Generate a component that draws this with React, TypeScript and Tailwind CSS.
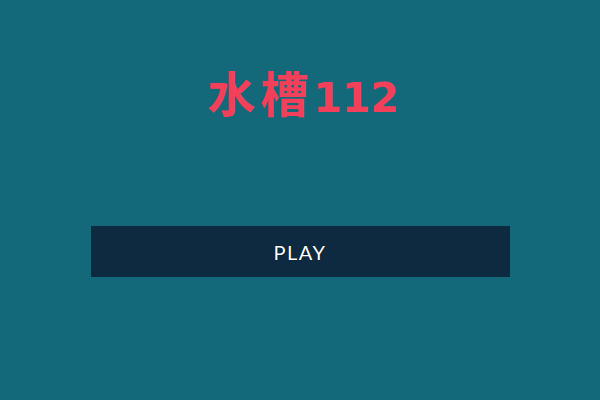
export default function App() {
  return (
    <div className="w-[600px] h-[400px] bg-[#136979] flex flex-col items-center">
      <h1 className="mt-[59px] ml-[6px] h-[64px] flex items-baseline font-bold text-[#f2405a] font-['DejaVu_Sans','Noto_Sans_CJK_SC',sans-serif]">
        <span className="text-[48px] leading-[64px] tracking-[5px] font-['Noto_Sans_CJK_SC',sans-serif]">水槽</span>
        <span className="text-[41px] leading-[64px]">112</span>
      </h1>
      <button className="mt-[103px] w-[419px] h-[51px] bg-[#0d2a40] text-white text-[20px] tracking-[1.5px] font-['Lato',sans-serif] [text-shadow:0_0_1px_#000]">
        PLAY
      </button>
    </div>
  );
}
